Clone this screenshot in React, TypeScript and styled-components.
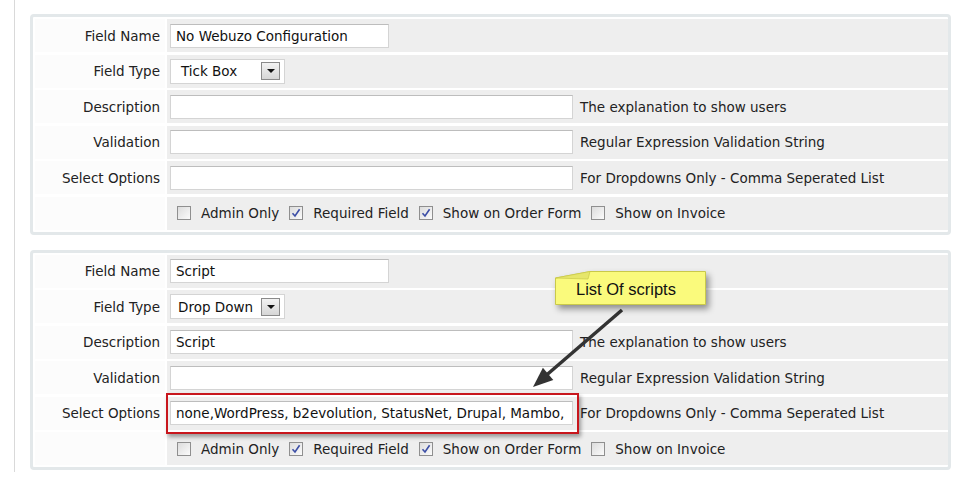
import React from "react";
import styled, { createGlobalStyle } from "styled-components";

const Global = createGlobalStyle`
  html, body { margin: 0; padding: 0; background: #ffffff; }
  body { font-family: "DejaVu Sans", Verdana, sans-serif; font-size: 13.5px; color: #1a1a1a; }
`;

const Page = styled.div`
  position: relative;
  width: 967px;
  height: 482px;
  overflow: hidden;
`;

const Frame = styled.div`
  margin-left: 14px;
  border-left: 1px solid #d9d9d9;
  height: 472px;
  padding: 14px 16px 0 15px;
  box-sizing: border-box;
  display: flex;
  flex-direction: column;
  gap: 15px;
`;

const Panel = styled.div`
  border: 3px solid #e3e8ea;
  border-radius: 4px;
  background: #ffffff;
  padding: 2px 0 2px 2px;
  display: grid;
  grid-template-columns: 130px 1fr;
  grid-auto-rows: 33px;
  column-gap: 2px;
  row-gap: 2.5px;
`;

const Label = styled.div`
  display: flex;
  align-items: center;
  justify-content: flex-end;
  padding-right: 5px;
  background: #fcfcfc;
  color: #222;
  white-space: nowrap;
`;

const Cell = styled.div`
  display: flex;
  align-items: center;
  background: #eeeeee;
  padding-left: 3px;
  gap: 7px;
  white-space: nowrap;
`;

const InputWrap = styled.div<{ $w: number; $marked?: boolean }>`
  position: relative;
  width: ${(p) => p.$w}px;
  height: 24px;
  ${(p) =>
    p.$marked
      ? `&::after {
      content: "";
      position: absolute;
      left: -4px; top: -8px; right: -6px; bottom: -9px;
      border: 2px solid #c8161d;
      box-shadow: 2px 3px 4px rgba(0,0,0,0.35);
      pointer-events: none;
    }`
      : ""}
`;

const TextBox = styled.div`
  box-sizing: border-box;
  width: 100%;
  height: 100%;
  background: #ffffff;
  border: 1px solid #d4d4d4;
  border-top-color: #bdbdbd;
  display: flex;
  align-items: center;
  padding-left: 5px;
  color: #111;
`;

const Help = styled.span`
  color: #222;
`;

const Select = styled.div<{ $gap: number }>`
  box-sizing: border-box;
  width: 115px;
  height: 25px;
  background: #ffffff;
  border: 1px solid #d4d4d4;
  display: flex;
  align-items: center;
  justify-content: space-between;
  padding: 0 4px 0 ${(p) => p.$gap}px;
  color: #111;
`;

const SelectArrow = styled.span`
  box-sizing: border-box;
  width: 19px;
  height: 18px;
  border: 1px solid #8a8a8a;
  background: linear-gradient(#f2f2f2, #d6d6d6);
  display: flex;
  align-items: center;
  justify-content: center;
  &::before {
    content: "";
    border-left: 4px solid transparent;
    border-right: 4px solid transparent;
    border-top: 4px solid #111;
  }
`;

const Checks = styled.div`
  display: flex;
  align-items: center;
  padding-left: 7px;
`;

const Box = styled.span`
  box-sizing: border-box;
  width: 14px;
  height: 14px;
  border: 1px solid #8f8f8f;
  background: linear-gradient(135deg, #dcdcdc, #fbfbfb);
  display: inline-flex;
  align-items: center;
  justify-content: center;
  margin: 0 10px 0 0;
`;

const CheckLabel = styled.span`
  margin-right: 10px;
  color: #222;
`;

const Callout = styled.div`
  position: absolute;
  left: 555px;
  top: 271px;
  width: 151px;
  height: 34px;
  display: flex;
  align-items: center;
  justify-content: flex-start;
  font-family: "Liberation Sans", Arial, sans-serif;
  font-size: 16.5px;
  color: #111;
  padding: 3px 0 0 21px;
  box-sizing: border-box;
  & > svg {
    position: absolute;
    inset: 0;
    overflow: visible;
    filter: drop-shadow(3px 4px 3px rgba(0,0,0,0.4));
  }
  & > span { position: relative; }
`;

const Arrow = styled.svg`
  position: absolute;
  left: 520px;
  top: 300px;
  overflow: visible;
`;

function Check({ on, label }: { on?: boolean; label: string }) {
  return (
    <>
      <Box>
        {on ? (
          <svg width="10" height="10" viewBox="0 0 10 10">
            <path d="M1.5 5.2 L4 8 L8.6 1.2" fill="none" stroke="#3c4ea6" strokeWidth="1.6" />
          </svg>
        ) : null}
      </Box>
      <CheckLabel>{label}</CheckLabel>
    </>
  );
}

type PanelProps = {
  name: string;
  type: string;
  typeGap: number;
  desc: string;
  options: string;
  marked?: boolean;
};

function FieldPanel({ name, type, typeGap, desc, options, marked }: PanelProps) {
  return (
    <Panel>
      <Label>Field Name</Label>
      <Cell>
        <InputWrap $w={219}>
          <TextBox>{name}</TextBox>
        </InputWrap>
      </Cell>
      <Label>Field Type</Label>
      <Cell>
        <Select $gap={typeGap}>
          {type}
          <SelectArrow />
        </Select>
      </Cell>
      <Label>Description</Label>
      <Cell>
        <InputWrap $w={403}>
          <TextBox>{desc}</TextBox>
        </InputWrap>
        <Help>The explanation to show users</Help>
      </Cell>
      <Label>Validation</Label>
      <Cell>
        <InputWrap $w={403}>
          <TextBox />
        </InputWrap>
        <Help>Regular Expression Validation String</Help>
      </Cell>
      <Label>Select Options</Label>
      <Cell>
        <InputWrap $w={403} $marked={marked}>
          <TextBox>{options}</TextBox>
        </InputWrap>
        <Help>For Dropdowns Only - Comma Seperated List</Help>
      </Cell>
      <Label />
      <Cell>
        <Checks>
          <Check label="Admin Only" />
          <Check on label="Required Field" />
          <Check on label="Show on Order Form" />
          <Check label="Show on Invoice" />
        </Checks>
      </Cell>
    </Panel>
  );
}

export default function App() {
  return (
    <Page>
      <Global />
      <Frame>
        <FieldPanel
          name="No Webuzo Configuration"
          type="Tick Box"
          typeGap={10}
          desc=""
          options=""
        />
        <FieldPanel
          name="Script"
          type="Drop Down"
          typeGap={7}
          desc="Script"
          options="none,WordPress, b2evolution, StatusNet, Drupal, Mambo,"
          marked
        />
      </Frame>
      <Arrow width="120" height="100" viewBox="0 0 120 100">
        <line x1="102" y1="10" x2="26" y2="75.5" stroke="#333" strokeWidth="3.5" />
        <polygon points="13,87 33.3,79.9 22.9,67.8" fill="#333" />
      </Arrow>
      <Callout>
        <svg width="151" height="34" viewBox="0 0 151 34">
          <polygon
            points="0.5,7 35,0.5 150.5,0.5 150.5,33.5 0.5,33.5"
            fill="#fafa7c"
            stroke="#c9c94a"
          />
          <polygon points="0.5,7 35,0.5 33,8" fill="#e6e66a" stroke="#c9c94a" strokeWidth="0.7" />
        </svg>
        <span>List Of scripts</span>
      </Callout>
    </Page>
  );
}
